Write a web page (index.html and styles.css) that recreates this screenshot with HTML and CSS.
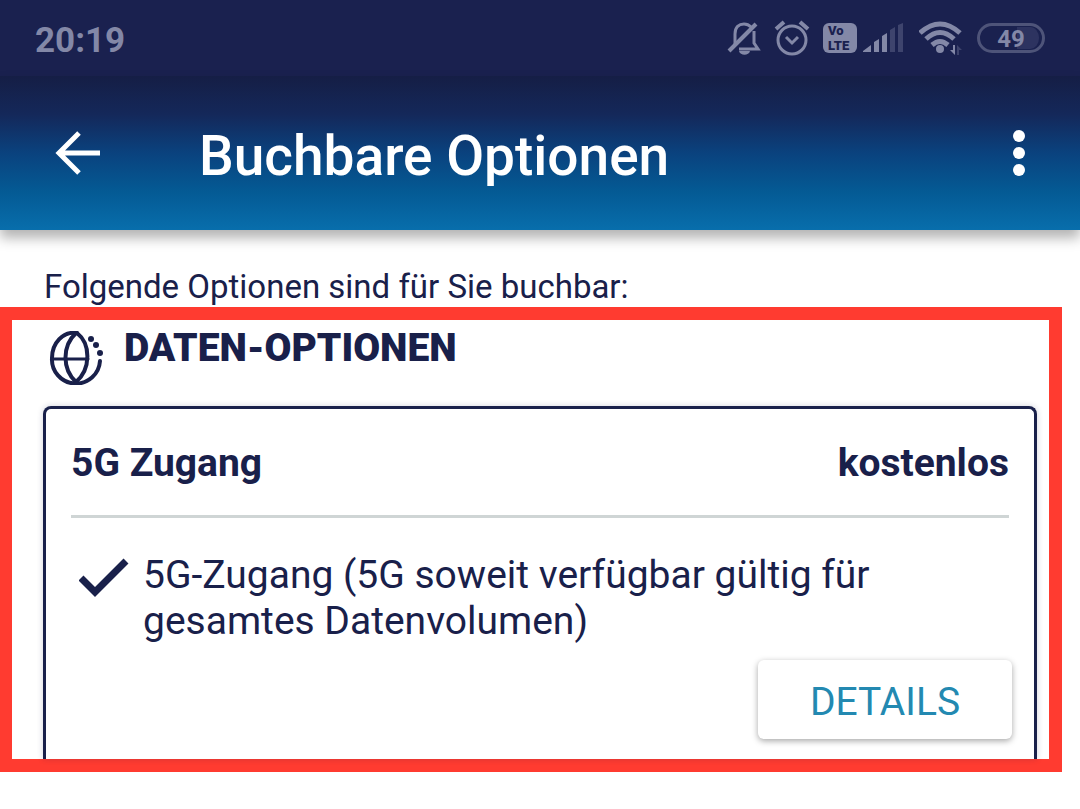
FILE: index.html
```html
<!DOCTYPE html>
<html lang="de">
<head>
  <meta charset="UTF-8" />
  <meta name="viewport" content="width=device-width, initial-scale=1.0"/>
  <title>Buchbare Optionen</title>
  <link rel="stylesheet" href="styles.css">
</head>

<body>
  <div class="status-bar">
    <span class="time">20:19</span>
    <div class="status-icons">
      <svg class="icon-bell" width="34" height="36" viewBox="0 0 34 36" fill="none" stroke="currentColor" stroke-width="3">
        <path d="M8 25V14C8 7 12 4 17 4c3 0 5 1 7 3M27 11v12l4 6H12" />
        <path d="M2 31L29 4" stroke-width="4" />
        <path d="M12 31h11c-1 5-10 5-11 0z" fill="currentColor" stroke="none" />
      </svg>
      <svg class="icon-alarm" width="36" height="36" viewBox="0 0 36 36" fill="none" stroke="currentColor" stroke-width="3">
        <circle cx="18" cy="20" r="14" />
        <path d="M12 17l6 6 6-6" />
        <path d="M2 9l8-7M34 9l-8-7" stroke-width="4" />
      </svg>
      <span class="volte"><span>Vo</span><span>LTE</span></span>
      <svg class="icon-signal" width="41" height="30" viewBox="0 0 41 30" fill="currentColor">
        <path d="M0 28l8-6v7H0zM11 19l5-3v13h-5zM19 13l5-3v19h-5z" />
        <path d="M27 7l5-3v25h-5zM35 2l5-2v29h-5z" opacity=".35" />
      </svg>
      <svg class="icon-wifi" width="44" height="36" viewBox="0 0 44 36" fill="none" stroke="currentColor" stroke-width="5">
        <path d="M1 13Q21-5 41 13M7 19Q21 6 35 19M13 25Q21 18 29 25" />
        <circle cx="21" cy="29" r="4" fill="currentColor" stroke="none" />
        <path d="M36 25v10l-5-5h3v-5z" fill="currentColor" stroke="none" />
        <path d="M38 25l5 5h-3v5h-2z" fill="currentColor" stroke="none" opacity=".35" />
      </svg>
      <span class="battery">49</span>
    </div>
  </div>

  <header class="app-bar">
    <button class="icon-btn" aria-label="Zurück">
      <svg width="46" height="46" viewBox="0 0 46 46" fill="none" stroke="currentColor" stroke-width="5">
        <path d="M24 3L4 23l20 20M4 23h41" />
      </svg>
    </button>
    <h1>Buchbare Optionen</h1>
    <button class="icon-btn" aria-label="Menü">
      <svg width="12" height="46" viewBox="0 0 12 46" fill="currentColor">
        <circle cx="6" cy="6" r="6" />
        <circle cx="6" cy="23" r="6" />
        <circle cx="6" cy="40" r="6" />
      </svg>
    </button>
  </header>

  <main>
    <p class="intro">Folgende Optionen sind für Sie buchbar:</p>

    <section class="highlight">
      <div class="section-title">
        <svg width="54" height="54" viewBox="0 0 54 54" fill="none" stroke="currentColor" stroke-width="4" stroke-linecap="round">
          <path d="M28 2C14 0 3 12 3 27a24 24 0 0 0 48 3" />
          <path d="M27 2C13 15 13 38 27 51M28 2C42 13 42 38 27 51" />
          <path d="M3 28h36" stroke-width="3" />
          <g fill="currentColor" stroke="none">
            <circle cx="42" cy="8" r="3" />
            <circle cx="47" cy="14" r="3" />
            <circle cx="51" cy="22" r="3" />
          </g>
        </svg>
        <h2>DATEN-OPTIONEN</h2>
      </div>

      <article class="card">
        <div class="card-head">
          <h3>5G Zugang</h3>
          <strong>kostenlos</strong>
        </div>
        <div class="feature">
          <svg width="50" height="40" viewBox="0 0 50 40" fill="none" stroke="currentColor" stroke-width="7">
            <path d="M2 20l14 14L47 3" />
          </svg>
          <p>5G-Zugang (5G soweit verfügbar gültig für gesamtes Datenvolumen)</p>
        </div>
        <button class="details">DETAILS</button>
      </article>
    </section>
  </main>
</body>
</html>
```

FILE: styles.css
```css
* {
  box-sizing: border-box;
}

body {
  margin: 0;
  background-color: #fff;
  color: #19204a;
  font-family: Roboto, sans-serif;
}

h1, h2, h3, p {
  margin: 0;
}

svg {
  display: block;
  flex-shrink: 0;
}

button {
  border: none;
  font-family: inherit;
  cursor: pointer;
}

.status-bar {
  display: flex;
  justify-content: space-between;
  align-items: center;
  height: 76px;
  padding: 0 35px;
  background-color: #1a214f;
  color: #8388a7;
}

.time {
  padding-top: 4px;
  font-size: 35px;
  font-weight: 700;
}

.status-icons {
  display: flex;
  align-items: center;
}

.icon-bell {
  margin-right: 13px;
}

.icon-alarm {
  margin-right: 13px;
}

.volte {
  display: flex;
  flex-direction: column;
  width: 34px;
  height: 30px;
  margin-right: 6px;
  padding-left: 5px;
  border-radius: 6px;
  background-color: #8388a7;
  color: #1a214f;
  font-size: 13px;
  font-weight: 900;
  line-height: 15px;
}

.icon-signal {
  margin-right: 15px;
}

.icon-wifi {
  margin-right: 14px;
}

.battery {
  width: 68px;
  height: 30px;
  padding: 1px 3px;
  border: 3px solid #4e5479;
  border-radius: 15px;
  background: linear-gradient(to right, #1a214f 60%, #2d3360 60%) content-box;
  font-size: 24px;
  font-weight: 700;
  line-height: 24px;
  text-align: center;
}

.app-bar {
  display: flex;
  align-items: center;
  height: 154px;
  padding: 0 55px;
  background: linear-gradient(#151e45, #14285a 25%, #0a427e 50%, #045a94 75%, #086eac);
  box-shadow: 0 8px 12px rgba(0, 0, 0, 0.3);
  color: #fff;
}

.app-bar h1 {
  flex: 1;
  margin-left: 98px;
  padding-top: 5px;
  font-size: 55px;
  font-weight: 500;
}

.icon-btn {
  padding: 0;
  background: none;
  color: inherit;
}

.intro {
  padding: 37px 44px 0;
  font-size: 33px;
  line-height: 40px;
}

.highlight {
  margin-right: 18px;
  padding: 10px 12px 0 31px;
  border: 13px solid #ff3b30;
  border-left-width: 12px;
}

.section-title {
  display: flex;
  align-items: flex-start;
  gap: 21px;
  padding-left: 6px;
}

.section-title h2 {
  font-size: 39px;
  font-weight: 900;
  line-height: 36px;
}

.section-title svg {
  margin-top: 1px;
}

.card {
  margin-top: 21px;
  padding: 0 22px 20px 25px;
  border: 3px solid #19204a;
  border-bottom: none;
  border-radius: 8px 8px 0 0;
  box-shadow: 0 0 6px rgba(25, 32, 74, 0.2);
}

.card-head {
  display: flex;
  justify-content: space-between;
  margin-right: 3px;
  padding: 31px 0 29px;
  border-bottom: 3px solid #cfd5d5;
  font-size: 39px;
  line-height: 46px;
}

.card-head h3 {
  font-size: inherit;
}

.feature {
  display: flex;
  gap: 14px;
  padding: 34px 80px 0 8px;
  font-size: 39px;
  line-height: 46px;
}

.feature svg {
  margin-top: 6px;
}

.details {
  display: block;
  width: 254px;
  height: 79px;
  margin: 16px 0 0 auto;
  padding-top: 6px;
  border-radius: 6px;
  background-color: #fff;
  box-shadow: 0 2px 6px rgba(0, 0, 0, 0.35);
  color: #2389b1;
  font-size: 39px;
}
```
